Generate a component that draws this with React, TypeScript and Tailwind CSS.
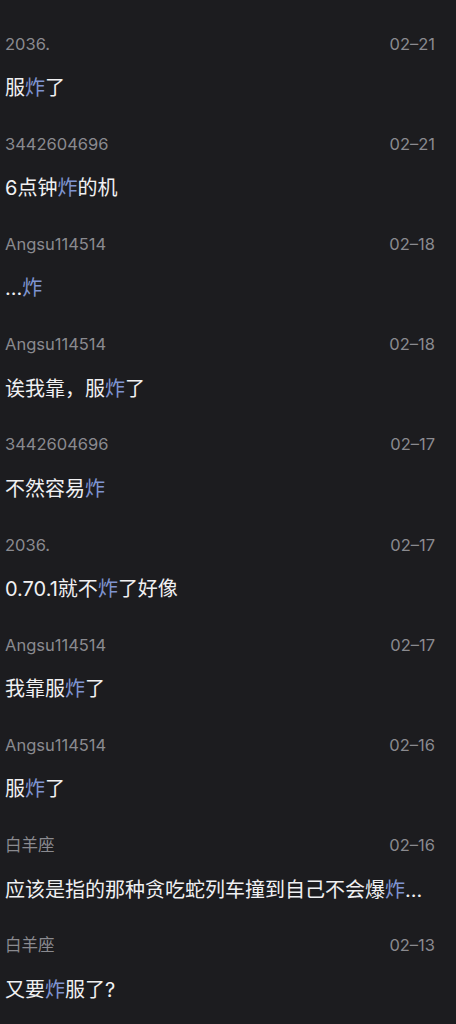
const comments: { user: string; date: string; parts: [string, string, string] }[] = [
  { user: "2036.", date: "02–21", parts: ["服", "炸", "了"] },
  { user: "3442604696", date: "02–21", parts: ["6点钟", "炸", "的机"] },
  { user: "Angsu114514", date: "02–18", parts: ["...", "炸", ""] },
  { user: "Angsu114514", date: "02–18", parts: ["诶我靠，服", "炸", "了"] },
  { user: "3442604696", date: "02–17", parts: ["不然容易", "炸", ""] },
  { user: "2036.", date: "02–17", parts: ["0.70.1就不", "炸", "了好像"] },
  { user: "Angsu114514", date: "02–17", parts: ["我靠服", "炸", "了"] },
  { user: "Angsu114514", date: "02–16", parts: ["服", "炸", "了"] },
  { user: "白羊座", date: "02–16", parts: ["应该是指的那种贪吃蛇列车撞到自己不会爆", "炸", "..."] },
  { user: "白羊座", date: "02–13", parts: ["又要", "炸", "服了?"] },
];

export default function App() {
  return (
    <div
      className="min-h-[1024px] w-[456px] bg-[#1c1c1f] pt-[34px]"
      style={{ fontFamily: 'Inter, "Noto Sans CJK SC", "Noto Sans", sans-serif' }}
    >
      {comments.map((c, i) => (
        <div key={i} className="pl-[5px] pr-[21px] pb-[34.2px]">
          <div className="flex h-[20px] items-center justify-between text-[16.5px] text-[#8a8a8f]">
            <span>{c.user}</span>
            <span>{c.date}</span>
          </div>
          <div className="mt-[22px] h-[24px] whitespace-nowrap leading-[24px] text-[20px] text-[#f0f0f2]">
            {c.parts[0]}
            <span className="text-[#7f94d0]">{c.parts[1]}</span>
            {c.parts[2]}
          </div>
        </div>
      ))}
    </div>
  );
}
